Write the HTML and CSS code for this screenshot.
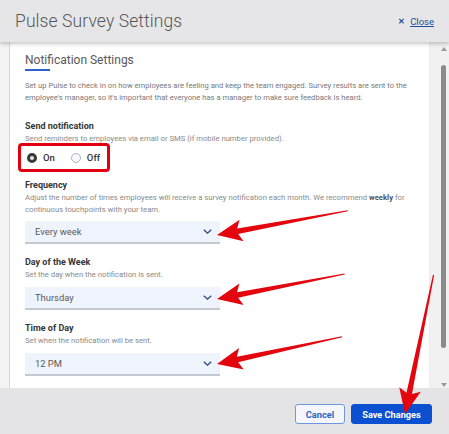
FILE: index.html
```html
<!DOCTYPE html>
<html lang="en">
<head>
<meta charset="utf-8">
<title>Pulse Survey Settings</title>
<link rel="stylesheet" href="styles.css">
</head>
<body>
<div class="dialog">
  <header class="head">
    <h1 class="title">Pulse Survey Settings</h1>
    <a class="close" href="#"><span class="close-x">✕</span><span class="close-text">Close</span></a>
  </header>
  <div class="body">
    <div class="gutter"></div>
    <div class="card">
      <h2 class="section-title">Notification Settings</h2>
      <div class="rule"></div>
      <p class="intro">Set up Pulse to check in on how employees are feeling and keep the team engaged. Survey results are sent to the<br>employee's manager, so it's important that everyone has a manager to make sure feedback is heard.</p>

      <div class="field first">
        <div class="label">Send notification</div>
        <div class="hint">Send reminders to employees via email or SMS (if mobile number provided).</div>
        <div class="radios">
          <span class="radio checked"></span><span class="rlabel">On</span>
          <span class="radio"></span><span class="rlabel">Off</span>
        </div>
      </div>

      <div class="field freq">
        <div class="label">Frequency</div>
        <div class="hint">Adjust the number of times employees will receive a survey notification each month. We recommend <b>weekly</b> for<br>continuous touchpoints with your team.</div>
        <div class="select"><span>Every week</span><svg class="chev" viewBox="0 0 9 5" width="9" height="5"><path d="M0.8 0.8 L4.5 4.2 L8.2 0.8" fill="none" stroke="#27407a" stroke-width="1.2"/></svg></div>
      </div>

      <div class="field">
        <div class="label">Day of the Week</div>
        <div class="hint">Set the day when the notification is sent.</div>
        <div class="select"><span>Thursday</span><svg class="chev" viewBox="0 0 9 5" width="9" height="5"><path d="M0.8 0.8 L4.5 4.2 L8.2 0.8" fill="none" stroke="#27407a" stroke-width="1.2"/></svg></div>
      </div>

      <div class="field">
        <div class="label">Time of Day</div>
        <div class="hint">Set when the notification will be sent.</div>
        <div class="select"><span>12 PM</span><svg class="chev" viewBox="0 0 9 5" width="9" height="5"><path d="M0.8 0.8 L4.5 4.2 L8.2 0.8" fill="none" stroke="#27407a" stroke-width="1.2"/></svg></div>
      </div>
    </div>
    <div class="scrollbar">
      <span class="sb-up"></span>
      <span class="sb-thumb"></span>
      <span class="sb-down"></span>
    </div>
  </div>
  <footer class="foot">
    <button class="btn cancel">Cancel</button>
    <button class="btn save">Save Changes</button>
  </footer>
</div>

<svg class="annotations" width="449" height="434" viewBox="0 0 449 434">
  <g fill="#e3060e">
    <polygon transform="translate(217,235) rotate(-10.5)" points="0,0 25,-11 21,-2.8 133,-0.6 133,0.6 21,2.8 25,11"/>
    <polygon transform="translate(217,299) rotate(-11.1)" points="0,0 25,-11 21,-2.8 130,-0.6 130,0.6 21,2.8 25,11"/>
    <polygon transform="translate(217,364) rotate(-12.3)" points="0,0 25,-11 21,-2.8 128,-0.6 128,0.6 21,2.8 25,11"/>
    <polygon transform="translate(405,414) rotate(-78.4)" points="0,0 25,-11 21,-2.8 142,-0.6 142,0.6 21,2.8 25,11"/>
  </g>
</svg>
</body>
</html>
```

FILE: styles.css
```css
html, body {
  margin: 0;
  padding: 0;
}

body {
  width: 449px;
  height: 434px;
  overflow: hidden;
  position: relative;
  font-family: Roboto, "Liberation Sans", sans-serif;
  background: #e4e4e6;
}

.dialog {
  display: flex;
  flex-direction: column;
  height: 434px;
}

/* Header */
.head {
  flex: none;
  height: 42px;
  box-sizing: border-box;
  padding: 0 15px 0 15px;
  display: flex;
  align-items: center;
  justify-content: space-between;
  background: #e6e6e8;
  box-shadow: 0 2px 4px rgba(0, 0, 0, 0.22);
  position: relative;
  z-index: 2;
}

.title {
  margin: 0;
  font-size: 17.5px;
  font-weight: 300;
  color: #575757;
  letter-spacing: 0.1px;
}

.close {
  display: flex;
  align-items: center;
  gap: 5px;
  font-size: 9.5px;
  color: #1c4d9e;
  text-decoration: none;
}

.close-x {
  font-size: 8px;
  font-weight: 700;
}

.close-text {
  text-decoration: underline;
}

/* Body */
.body {
  flex: none;
  height: 346px;
  display: grid;
  grid-template-columns: 10px 420px 19px;
  overflow: hidden;
}

.gutter {
  background: #f3f3f4;
  border-right: 1px solid #dadada;
}

.card {
  background: #fff;
  border-right: 1px solid #ececec;
  padding: 10px 0 0 15px;
  overflow: hidden;
}

.section-title {
  margin: 0;
  font-size: 12px;
  line-height: 16px;
  font-weight: 400;
  color: #585858;
}

.rule {
  width: 25px;
  height: 2px;
  margin-top: 1px;
  background: #2d63c9;
}

.intro {
  margin: 9px 0 0;
  font-size: 7.65px;
  line-height: 12px;
  color: #7a7a7a;
  white-space: nowrap;
}

.field {
  margin-top: 12px;
}

.field.first {
  margin-top: 16px;
}

.field.freq {
  margin-top: 7px;
}

.label {
  font-size: 9px;
  line-height: 13px;
  font-weight: 700;
  color: #363636;
}

.hint {
  font-size: 7.7px;
  line-height: 12px;
  color: #8a8a8a;
  white-space: nowrap;
}

.hint b {
  color: #555;
}

.radios {
  display: inline-flex;
  align-items: center;
  margin: -2px 0 0 -7px;
  height: 23px;
  padding: 0 7px 0 6px;
  border: 3px solid #e1000f;
  border-radius: 4px;
  font-size: 9.5px;
}

.radio {
  width: 10px;
  height: 10px;
  box-sizing: border-box;
  border-radius: 50%;
  border: 1px solid #a9b1bd;
  background: #f6f8fb;
}

.radio.checked {
  border: 3px solid #3a3a3a;
  background: #e8e8e8;
}

.rlabel {
  margin-left: 6px;
  margin-right: 16px;
  font-weight: 500;
  color: #333;
}

.rlabel:last-child {
  margin-right: 0;
}

.select {
  margin-top: 5px;
  width: 195px;
  height: 23px;
  box-sizing: border-box;
  padding: 0 8px 0 10px;
  display: flex;
  align-items: center;
  justify-content: space-between;
  background: #eef3fc;
  border-bottom: 2px solid #c4c8cf;
  font-size: 9.4px;
  color: #5a5a5a;
}

.field:not(.freq) .select {
  margin-top: 6px;
}

/* Scrollbar */
.scrollbar {
  background: #f1f1f2;
  display: flex;
  flex-direction: column;
  align-items: flex-start;
  padding-left: 11px;
}

.sb-up, .sb-down {
  width: 0;
  height: 0;
  border-left: 3px solid transparent;
  border-right: 3px solid transparent;
}

.sb-up {
  margin-top: 5px;
  border-bottom: 4px solid #9a9a9a;
}

.sb-thumb {
  margin-top: 14px;
  width: 5px;
  height: 283px;
  border-radius: 3px;
  background: #8a8a8a;
}

.sb-down {
  margin-top: 35px;
  border-top: 4px solid #9a9a9a;
}

/* Footer */
.foot {
  flex: 1;
  display: flex;
  justify-content: flex-end;
  align-items: flex-start;
  gap: 6px;
  padding: 16px 17px 0 0;
  background: #e4e4e6;
}

.btn {
  height: 20px;
  box-sizing: border-box;
  border-radius: 3px;
  font-family: Roboto, "Liberation Sans", sans-serif;
  font-size: 9.2px;
  font-weight: 700;
  padding: 0;
  cursor: pointer;
}

.cancel {
  width: 50px;
  background: #f5f7fc;
  border: 1px solid #6d98df;
  color: #2f63bd;
}

.save {
  width: 81px;
  background: #0b50d0;
  border: 1px solid #0b50d0;
  color: #fff;
}

/* Annotation overlay */
.annotations {
  position: absolute;
  left: 0;
  top: 0;
  pointer-events: none;
  z-index: 5;
}
```
